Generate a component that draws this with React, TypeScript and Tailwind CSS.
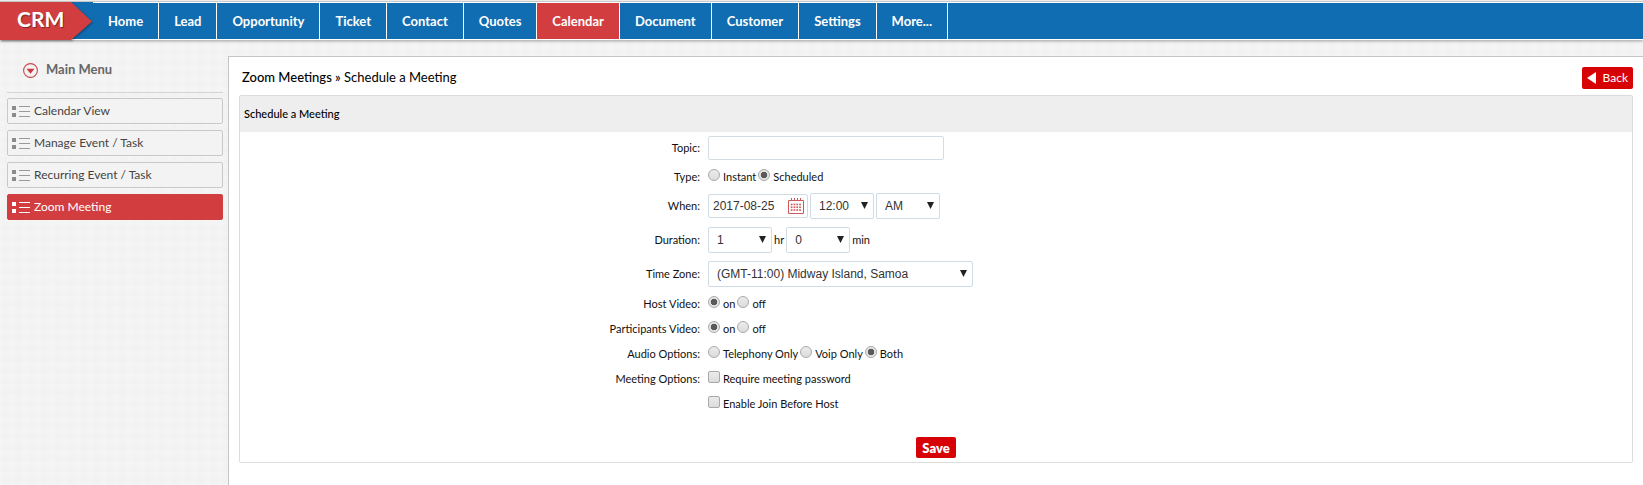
import React from "react";
import clsx from "clsx";

const navItems = [
  "Home",
  "Lead",
  "Opportunity",
  "Ticket",
  "Contact",
  "Quotes",
  "Calendar",
  "Document",
  "Customer",
  "Settings",
  "More...",
];

const menuItems = [
  "Calendar View",
  "Manage Event / Task",
  "Recurring Event / Task",
  "Zoom Meeting",
];

function ListIcon({ active }: { active: boolean }) {
  const box = active ? "#ffffff" : "#8b8b8b";
  const line = active ? "#ffffff" : "#9a9a9a";
  return (
    <svg width="18" height="12" viewBox="0 0 18 12" aria-hidden="true" shapeRendering="crispEdges">
      <rect x="0" y="1" width="4" height="4" fill={box} />
      <rect x="0" y="8" width="4" height="4" fill={box} />
      <rect x="7" y="1" width="11" height="1" fill={line} />
      <rect x="7" y="6" width="11" height="1" fill={line} />
      <rect x="7" y="11" width="11" height="1" fill={line} />
    </svg>
  );
}

function CalendarIcon() {
  const dots = [0, 1, 2].flatMap((r) => [0, 1, 2, 3].map((c) => [c, r]));
  return (
    <svg width="16" height="16" viewBox="0 0 16 16" aria-hidden="true">
      <path d="M.5 2.5h15v13H.5z" fill="#fff" stroke="#cf5a5c" />
      <path d="M3.5 0v3M6.5 0v3M9.5 0v3M12.5 0v3" stroke="#cf5a5c" />
      {dots.map(([c, r]) => (
        <rect key={`${c}-${r}`} x={2.8 + c * 2.8} y={5.6 + r * 2.8} width="1.7" height="1.7" fill="#cf5a5c" />
      ))}
    </svg>
  );
}

function Row({ label, htmlFor, className, children }: {
  label?: string;
  htmlFor?: string;
  className: string;
  children: React.ReactNode;
}) {
  return (
    <div className={clsx("flex items-center", className)}>
      <div className="w-1/3 shrink-0 pr-1 text-right">
        {label && (htmlFor ? <label htmlFor={htmlFor}>{label}</label> : <span>{label}</span>)}
      </div>
      <div className="flex items-center pl-1">{children}</div>
    </div>
  );
}

function Radio({ name, text, checked }: { name: string; text: string; checked?: boolean }) {
  return (
    <label className="mr-0.5 flex items-center gap-[3px]">
      <input
        type="radio"
        name={name}
        defaultChecked={checked}
        className="mb-1.5 size-3 appearance-none rounded-full border border-[#a9a9a9] bg-linear-to-b from-[#ebebeb] to-[#dcdcdc] checked:bg-[radial-gradient(circle,#5a5a5a_0_3px,#e6e6e6_3.6px)]"
      />
      {text}
    </label>
  );
}

function Check({ text }: { text: string }) {
  return (
    <label className="flex items-center gap-[3px]">
      <input
        type="checkbox"
        className="mb-1.5 size-3 appearance-none rounded-xs border border-[#a9a9a9] bg-linear-to-b from-[#ebebeb] to-[#dcdcdc] checked:bg-[#5a5a5a] checked:bg-none"
      />
      {text}
    </label>
  );
}

function Select({ id, label, options, className }: {
  id?: string;
  label: string;
  options: string[];
  className: string;
}) {
  return (
    <div className={clsx("relative", className)}>
      <select
        id={id}
        aria-label={label}
        className="block h-[26px] w-full appearance-none rounded-xs border border-[#cfdce6] bg-white pl-2 font-['Liberation_Sans',sans-serif] text-[12px] text-[#333]"
      >
        {options.map((o) => (
          <option key={o}>{o}</option>
        ))}
      </select>
      <svg width="7" height="7" viewBox="0 0 7 7" aria-hidden="true" className="pointer-events-none absolute top-[9px] right-[6px]">
        <path d="M0 0h7L3.5 7z" fill="#222" />
      </svg>
    </div>
  );
}

export default function App() {
  return (
    <div className="flex min-h-screen flex-col bg-[#f1f1f1] bg-[repeating-linear-gradient(0deg,rgba(255,255,255,0.18)_0,transparent_4px,rgba(255,255,255,0.18)_11px),repeating-linear-gradient(90deg,rgba(255,255,255,0.18)_0,transparent_5px,rgba(255,255,255,0.18)_13px)] font-[Lato,sans-serif] text-[11px] text-[#111]">
      <header className="relative z-10 border-t border-[#ececec] shadow-[0_1px_3px_rgba(0,0,0,0.35)]">
        <div className="flex border-y border-t-[#c8c8c8] border-b-white bg-[#116db2]">
          <a href="#crm" className="relative w-[93px] shrink-0" aria-label="CRM">
            <svg viewBox="0 0 93 38" width="93" height="38" className="absolute top-0 left-0 drop-shadow-[1px_1px_1px_rgba(0,0,0,0.35)]" aria-hidden="true">
              <path d="M0 0h71l21 19.5L71 38H0z" fill="#d23e40" />
            </svg>
            <span className="relative flex h-[34px] items-center pl-[17px] text-[21px] font-bold text-white [text-shadow:1px_1px_1px_rgba(0,0,0,0.4)]">
              CRM
            </span>
          </a>
          <nav className="flex grow border-t border-white">
            {navItems.map((item) => (
              <a
                key={item}
                href={`#${item.toLowerCase()}`}
                className={clsx(
                  "flex h-9 items-center border-r border-white px-[15px] pt-[2px] text-[13px] font-bold text-white",
                  item === "Calendar" && "bg-[#d23e40]",
                )}
              >
                {item}
              </a>
            ))}
          </nav>
        </div>
      </header>

      <div className="flex grow pt-4">
        <aside className="w-[228px] shrink-0 pr-[5px] pl-[7px]">
          <h2 className="mb-[5px] flex h-[37px] items-start gap-2 border-b border-[#d4d4d4] pl-4 text-[13px] leading-[26px] font-bold text-[#666]">
            <svg width="15" height="15" viewBox="0 0 15 15" aria-hidden="true" className="mt-[7px]">
              <circle cx="7.5" cy="7.5" r="6.9" fill="none" stroke="#c9484c" strokeWidth="1.1" />
              <path d="M3.5 5.8h8l-4 5z" fill="#c93a3f" />
            </svg>
            Main Menu
          </h2>
          <ul className="flex flex-col gap-[6px]">
            {menuItems.map((item) => {
              const active = item === "Zoom Meeting";
              return (
                <li key={item}>
                  <a
                    href="#menu"
                    className={clsx(
                      "flex h-[26px] items-center gap-1 rounded-xs border pl-1 text-[12px]",
                      active ? "border-[#d23e40] bg-[#d23e40] text-white" : "border-[#c9c9c9] bg-[#f3f3f3] text-[#444]",
                    )}
                  >
                    <ListIcon active={active} />
                    {item}
                  </a>
                </li>
              );
            })}
          </ul>
        </aside>

        <main className="grow border-t border-l border-[#c4c4c4] bg-white px-[10px] pb-5">
          <div className="flex h-[38px] items-center justify-between">
            <h1 className="pt-1 pl-[3px] text-[13px] text-black">
              <span className="font-medium">Zoom Meetings »</span> Schedule a Meeting
            </h1>
            <button type="button" className="mt-1 flex h-[22px] items-center gap-[7px] rounded-xs bg-[#d60206] px-[5px] text-[12px] text-white">
              <svg width="9" height="12" viewBox="0 0 9 12" aria-hidden="true">
                <path d="M9 0v12L0 6z" fill="#fff" />
              </svg>
              Back
            </button>
          </div>

          <form className="rounded-xs border border-[#dcdcdc] pb-1" onSubmit={(e) => e.preventDefault()}>
            <h2 className="flex h-9 items-center bg-[#eee] pl-1 text-[11px] font-medium text-black">Schedule a Meeting</h2>

            <Row label="Topic:" htmlFor="topic" className="h-8">
              <input id="topic" type="text" className="h-6 w-[236px] rounded-xs border border-[#d3dde4] px-1" />
            </Row>
            <Row label="Type:" className="h-[25px] pt-[2px]">
              <Radio name="type" text="Instant" />
              <Radio name="type" text="Scheduled" checked />
            </Row>
            <Row label="When:" htmlFor="when" className="h-[34px]">
              <div className="mr-[2px] flex h-6 w-[100px] items-center rounded-xs border border-[#cfdce6] pr-[3px] pl-1">
                <input
                  id="when"
                  type="text"
                  defaultValue="2017-08-25"
                  className="w-0 grow font-['Liberation_Sans',sans-serif] text-[12px] text-[#333]"
                />
                <CalendarIcon />
              </div>
              <Select label="Time" options={["12:00"]} className="mr-[2px] w-16" />
              <Select label="AM or PM" options={["AM", "PM"]} className="w-16" />
            </Row>
            <Row label="Duration:" htmlFor="hours" className="h-[34px]">
              <Select id="hours" label="Duration hours" options={["1", "2"]} className="w-16" />
              <span className="px-[2px]">hr</span>
              <Select label="Duration minutes" options={["0", "30"]} className="w-16" />
              <span className="px-[2px]">min</span>
            </Row>
            <Row label="Time Zone:" htmlFor="zone" className="h-[34px]">
              <Select id="zone" label="Time Zone" options={["(GMT-11:00) Midway Island, Samoa"]} className="w-[265px]" />
            </Row>
            <Row label="Host Video:" className="h-[25px] pt-[2px]">
              <Radio name="host" text="on" checked />
              <Radio name="host" text="off" />
            </Row>
            <Row label="Participants Video:" className="h-[25px] pt-[2px]">
              <Radio name="participants" text="on" checked />
              <Radio name="participants" text="off" />
            </Row>
            <Row label="Audio Options:" className="h-[25px] pt-[2px]">
              <Radio name="audio" text="Telephony Only" />
              <Radio name="audio" text="Voip Only" />
              <Radio name="audio" text="Both" checked />
            </Row>
            <Row label="Meeting Options:" className="h-[25px] pt-[2px]">
              <Check text="Require meeting password" />
            </Row>
            <Row className="h-[25px] pt-[2px]">
              <Check text="Enable Join Before Host" />
            </Row>

            <div className="flex justify-center pt-[21px]">
              <button type="submit" className="h-[21px] rounded-xs bg-[#d60206] px-[6px] text-[13px] leading-[18px] font-extrabold text-white">
                Save
              </button>
            </div>
          </form>
        </main>
      </div>
    </div>
  );
}
